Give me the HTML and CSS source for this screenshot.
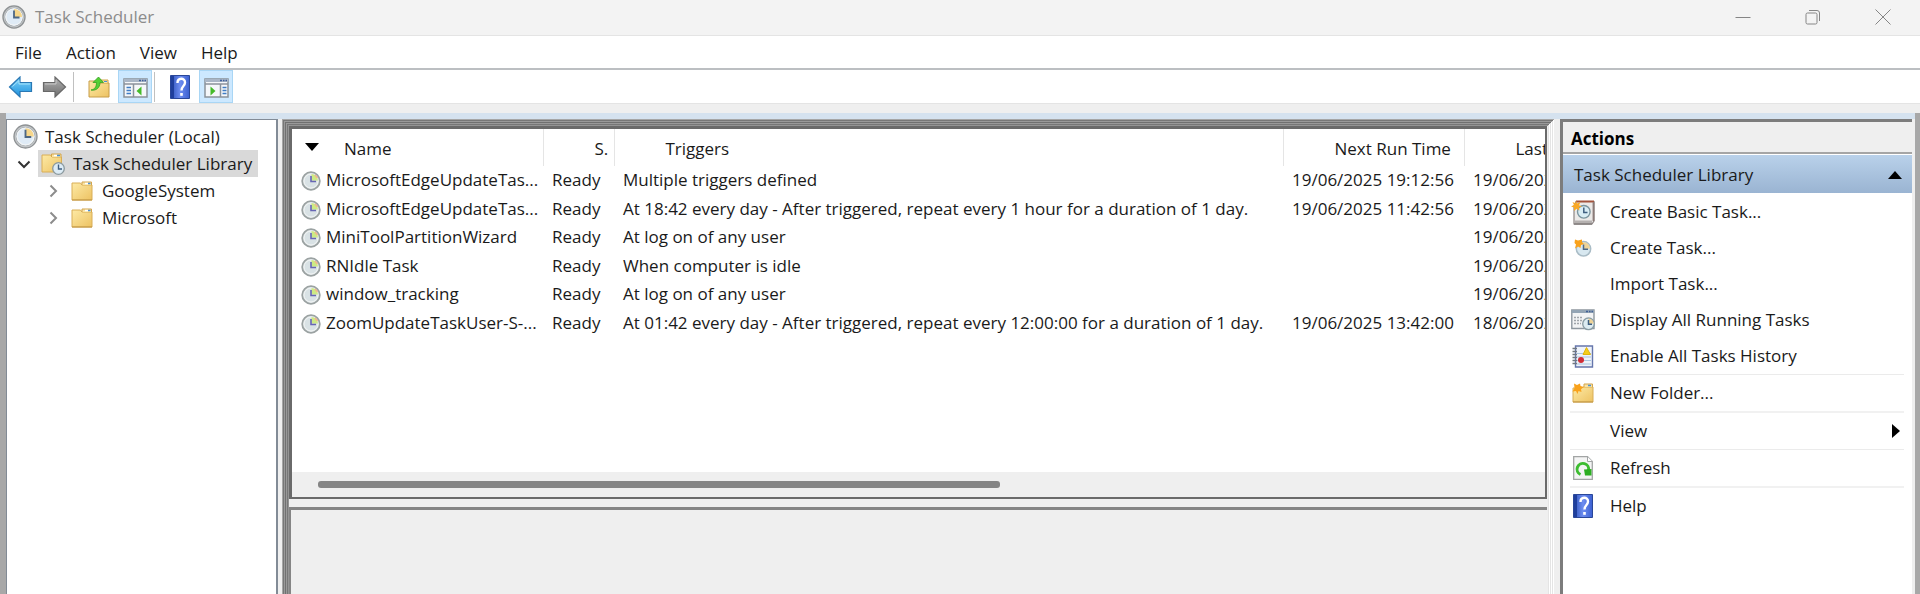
FILE: index.html
```html
<!DOCTYPE html>
<html lang="en">
<head>
<meta charset="utf-8">
<title>Task Scheduler</title>
<link rel="stylesheet" href="styles.css">
</head>
<body>
<svg class="defs" aria-hidden="true">
  <defs>
    <linearGradient id="gold" x1="0" y1="0" x2="1" y2="1"><stop offset="0" stop-color="#fdeaa6"/><stop offset="1" stop-color="#edc262"/></linearGradient>
    <linearGradient id="blue" x1="0" y1="0" x2="0" y2="1"><stop offset="0" stop-color="#7fd4fa"/><stop offset="1" stop-color="#1c8fdc"/></linearGradient>
    <linearGradient id="grey" x1="0" y1="0" x2="0" y2="1"><stop offset="0" stop-color="#b4b4b4"/><stop offset="1" stop-color="#6c6c6c"/></linearGradient>
    <linearGradient id="book" x1="0" y1="0" x2="1" y2="0"><stop offset="0" stop-color="#2b50b8"/><stop offset="0.5" stop-color="#6d8df0"/><stop offset="1" stop-color="#3a5fd0"/></linearGradient>
  </defs>
  <symbol id="i-clock" viewBox="0 0 24 24">
    <circle cx="12" cy="12" r="10.300" fill="#e3eef7" stroke="#8e9294" stroke-width="2.800"/>
    <circle cx="12" cy="12" r="9.800" fill="none" stroke="#c3c6c8" stroke-width="1.200"/>
    <circle cx="12" cy="12" r="8" fill="#dfebf6" stroke="#f2f4f5" stroke-width="1"/>
    <path d="M12 12V4A8 8 0 0 1 20 12Z" fill="#f6d68a"/>
    <path d="M12 5.500V12.500H17.500" fill="none" stroke="#4d6784" stroke-width="1.800"/>
  </symbol>
  <symbol id="i-task" viewBox="0 0 20 20">
    <circle cx="10" cy="10" r="8.800" fill="#dde4e6" stroke="#9ba2a2" stroke-width="1.800"/>
    <circle cx="10" cy="10" r="7" fill="#d9e2e5" stroke="#f3f5f5"/>
    <path d="M10.500 9.500V3A7 7 0 0 1 17 9.500Z" fill="#cdea84"/>
    <path d="M14 4l2.500 3" stroke="#f4b58c" stroke-width="1.500"/>
    <path d="M10 5V10.500H15" fill="none" stroke="#6766b4" stroke-width="1.600"/>
  </symbol>
  <symbol id="i-folder" viewBox="0 0 22 20">
    <path d="M1 2H9.500L11 4H21V19H1Z" fill="url(#gold)" stroke="#d9ae56"/>
    <path d="M11 4V1H20.500V4" fill="#f8e3a4" stroke="#d3a54c"/>
    <path d="M14 2.500H17" stroke="#fff" stroke-width="1.500"/><path d="M17 2.500H19.500" stroke="#4a90d6" stroke-width="1.500"/>
    <path d="M1 19H21" stroke="#bf9443"/>
  </symbol>
  <symbol id="i-folder-clock" viewBox="0 0 24 22">
    <path d="M1 2H9.500L11 4H20.500V19H1Z" fill="url(#gold)" stroke="#d9ae56"/>
    <path d="M10.500 4V1H20V4" fill="#f8e3a4" stroke="#d3a54c"/>
    <path d="M13 2.500H16" stroke="#fff" stroke-width="1.500"/><path d="M16 2.500H19" stroke="#4a90d6" stroke-width="1.500"/>
    <circle cx="17.500" cy="15.500" r="5.800" fill="#dcebf5" stroke="#8a999e" stroke-width="1.300"/>
    <path d="M17.500 11.500V16H21" fill="none" stroke="#3f5f80" stroke-width="1.400"/>
  </symbol>
  <symbol id="i-back" viewBox="0 0 24 22">
    <path d="M1 11L11.500 1V6.500H23V15.500H11.500V21Z" fill="url(#blue)" stroke="#2a78b4" stroke-width="1.200"/>
    <path d="M4 10.500L10.500 4.500V8H21.500" fill="none" stroke="#a5e2fb"/>
  </symbol>
  <symbol id="i-forward" viewBox="0 0 24 22">
    <path d="M23 11L12.500 1V6.500H1V15.500H12.500V21Z" fill="url(#grey)" stroke="#686868" stroke-width="1.200"/>
    <path d="M2.500 8H13.500V4" fill="none" stroke="#c8c8c8"/>
  </symbol>
  <symbol id="i-up" viewBox="0 0 22 22">
    <path d="M1 5H9L11 7H21V21H1Z" fill="url(#gold)" stroke="#c79c48"/>
    <path d="M11 7V4H20V7" fill="#f8e3a4" stroke="#d3a54c"/><path d="M16 5.500H19" stroke="#4a90d6"/>
    <path d="M3 14C7 13.500 8.500 10.500 8.500 6.500H5L10.500 1L15.500 6.500H12C12 11.500 8.500 15 3 14Z" fill="#55cf35" stroke="#34a11e" stroke-width="0.800"/>
  </symbol>
  <symbol id="i-pane-left" viewBox="0 0 25 20">
    <path d="M1 1H24V19H1Z" fill="#f5f7fa" stroke="#8b929b" stroke-width="1.500"/>
    <path d="M1 1H24V4H1Z" fill="#aab6c6"/><path d="M1 6H24" stroke="#8b929b" stroke-width="1.500"/>
    <path d="M16 2.500H18M19 2.500H20.500M21.500 2.500H23" stroke="#3f5f9c" stroke-width="1.500"/>
    <path d="M10.500 6V19" stroke="#8b929b" stroke-width="1.500"/>
    <path d="M3.500 9.500H8M3.500 12.500H8M3.500 15.500H8" stroke="#3f7cc4" stroke-width="1.500"/>
    <path d="M18.500 8.500V17.500L13.500 13Z" fill="#45bb2a"/>
  </symbol>
  <symbol id="i-pane-right" viewBox="0 0 25 20">
    <path d="M1 1H24V19H1Z" fill="#f5f7fa" stroke="#8b929b" stroke-width="1.500"/>
    <path d="M1 1H24V4H1Z" fill="#aab6c6"/><path d="M1 6H24" stroke="#8b929b" stroke-width="1.500"/>
    <path d="M16 2.500H18M19 2.500H20.500M21.500 2.500H23" stroke="#3f5f9c" stroke-width="1.500"/>
    <path d="M16.500 6V19" stroke="#8b929b" stroke-width="1.500"/>
    <path d="M18.500 9.500H22.500M18.500 12.500H22.500M18.500 15.500H22.500" stroke="#3f7cc4" stroke-width="1.500"/>
    <path d="M6.500 8.500V17.500L11.500 13Z" fill="#45bb2a"/>
  </symbol>
  <symbol id="i-help" viewBox="0 0 20 24">
    <path d="M0.500 0.500H19.500V23.500H0.500Z" fill="url(#book)" stroke="#2a4799"/>
    <path d="M2.500 1V23" stroke="#1f3f9c" stroke-width="3"/>
    <path d="M7.500 8C7.500 2.500 15 2.500 15 7.500C15 11 11.500 11 11.500 15.500" fill="none" stroke="#fff" stroke-width="2.400"/>
    <path d="M11.500 18V20.800" stroke="#fff" stroke-width="2.600"/>
  </symbol>
  <symbol id="i-basic" viewBox="0 0 24 25">
    <path d="M5 1.500H23V21L21 24H3V6Z" fill="#eceae8" stroke="#8d8584" stroke-width="1.200"/>
    <path d="M5 1.500H23" stroke="#a3533d" stroke-width="2"/><path d="M22.500 2V21" stroke="#8c7b78" stroke-width="1.800"/>
    <path d="M3 20.500H21V24H3Z" fill="#b5b1b0"/><path d="M3 24H21" stroke="#817b7a" stroke-width="1.500"/>
    <circle cx="12.800" cy="11.800" r="6.300" fill="#d9edf4" stroke="#7b959f" stroke-width="1.400"/>
    <path d="M12.800 7.500V12.500H16.500" fill="none" stroke="#3f5f80" stroke-width="1.500"/>
    <path d="M5 0.500L6 3.500L9.500 2L8 5.200L11 6.500L7.800 7.500L8.500 10.500L5.500 8.800L3 11L3 7.600L0 6.500L3 5L1.500 2L4.300 3.300Z" fill="#f9a825"/>
  </symbol>
  <symbol id="i-create" viewBox="0 0 18 18">
    <circle cx="9.500" cy="9.800" r="7.200" fill="#d8e8f0" stroke="#a9bcc6" stroke-width="1.500"/>
    <path d="M9.500 9.800V3A6.500 6.500 0 0 1 16 9.800Z" fill="#eed398"/>
    <path d="M9.500 5.500V10.200H14" fill="none" stroke="#4d6784" stroke-width="1.500"/>
    <path d="M1 0.500L4 1.500L8 0.500V3L10 5L7 6L6.500 9L4 7.500L1 9.500L2 5.500L0.500 4Z" fill="#f9a21b"/>
  </symbol>
  <symbol id="i-running" viewBox="0 0 24 22">
    <path d="M0.800 1H23V19.500H0.800Z" fill="#f2f3f4" stroke="#8e979f" stroke-width="1.400"/>
    <path d="M0.800 1H23V4H0.800Z" fill="#93a4b4"/><path d="M15 2.500H17M18 2.500H19.500M20.500 2.500H22" stroke="#405f96" stroke-width="1.500"/>
    <path d="M3 8.500H12M3 11.500H11M3 14.500H10" stroke="#a0a5aa" stroke-width="1.500" stroke-dasharray="2 1"/>
    <circle cx="17.500" cy="14.800" r="5.800" fill="#dcebf1" stroke="#8b9da5" stroke-width="1.400"/>
    <path d="M17.500 14.800V9.500A5 5 0 0 1 22.500 14.800Z" fill="#eed398"/>
    <path d="M17.500 11V15.200H21" fill="none" stroke="#3f5f80" stroke-width="1.500"/>
  </symbol>
  <symbol id="i-history" viewBox="0 0 22 23">
    <path d="M3.500 1H20.500V22H3.500Z" fill="#eef3fa" stroke="#6576ac" stroke-width="1.400"/>
    <path d="M5 8.500H19M5 12H19M5 15.500H19M5 19H19" stroke="#a9c6df" stroke-width="1.200"/>
    <path d="M0.500 3.500H5M0.500 6.500H5M0.500 9.500H5M0.500 12.500H5M0.500 15.500H5M0.500 18.500H5" stroke="#707780" stroke-width="1.300"/>
    <path d="M14.500 2.500L18.500 9.500H11Z" fill="#f5ce1b" stroke="#e0b40c"/>
    <circle cx="9" cy="15" r="3" fill="#d12d36"/>
  </symbol>
  <symbol id="i-new-folder" viewBox="0 0 22 20">
    <path d="M1 5H10L11 4H21V19H1Z" fill="url(#gold)" stroke="#d9ae56"/>
    <path d="M12 4V1H20.500V4" fill="#f8e3a4" stroke="#d3a54c"/><path d="M16 2.500H19" stroke="#4a90d6" stroke-width="1.500"/>
    <path d="M1 19H21" stroke="#bf9443"/>
    <path d="M2 0.500L5 2L8 0.500L8.500 3L12 4L9 6L9.500 9L6.500 8L5.500 11L4 8L0.500 8.500L2.500 5Z" fill="#f9a21b"/>
  </symbol>
  <symbol id="i-refresh" viewBox="0 0 20 24">
    <path d="M0.700 0.700H14.500L19.300 5.500V23.300H0.700Z" fill="#f4f5f5" stroke="#a2a5a5" stroke-width="1.300"/>
    <path d="M14.500 0.700V5.500H19.300" fill="#fff" stroke="#a2a5a5"/>
    <path d="M7.500 18.500A5.800 5.800 0 1 1 15.500 14.500" fill="none" stroke="#3dbd31" stroke-width="3"/>
    <path d="M11 13.500L18.500 13V19.500H12Z" fill="#2cae22"/>
  </symbol>
</svg>

<div class="window">
  <header class="titlebar">
    <svg class="app-icon"><use href="#i-clock"/></svg>
    <h1 class="app-title">Task Scheduler</h1>
    <div class="window-buttons">
      <button class="window-button" aria-label="Minimize"><svg width="16" height="16" viewBox="0 0 16 16"><path d="M0.500 8.500H15.500"/></svg></button>
      <button class="window-button" aria-label="Restore"><svg width="16" height="16" viewBox="0 0 16 16"><rect x="1" y="4" width="11" height="11" rx="1.500"/><path d="M4 1.500H12Q14.500 1.500 14.500 4V12"/></svg></button>
      <button class="window-button" aria-label="Close"><svg width="16" height="16" viewBox="0 0 16 16"><path d="M0.500 0.500L15.500 15.500M15.500 0.500L0.500 15.500"/></svg></button>
    </div>
  </header>

  <nav class="menubar">
    <button class="menu">File</button>
    <button class="menu">Action</button>
    <button class="menu">View</button>
    <button class="menu">Help</button>
  </nav>

  <div class="toolbar">
    <button class="tool" aria-label="Back"><svg width="25" height="22"><use href="#i-back"/></svg></button>
    <button class="tool" aria-label="Forward"><svg width="25" height="22"><use href="#i-forward"/></svg></button>
    <span class="divider"></span>
    <button class="tool wide" aria-label="Up one level"><svg width="22" height="22"><use href="#i-up"/></svg></button>
    <button class="tool pressed" aria-label="Show console tree"><svg width="25" height="20"><use href="#i-pane-left"/></svg></button>
    <span class="divider"></span>
    <button class="tool wide" aria-label="Help"><svg width="20" height="24"><use href="#i-help"/></svg></button>
    <button class="tool pressed" aria-label="Show action pane"><svg width="25" height="20"><use href="#i-pane-right"/></svg></button>
  </div>

  <main class="workspace">
    <nav class="tree" aria-label="Console tree">
      <a class="node root" href="#"><svg width="25" height="25"><use href="#i-clock"/></svg>Task Scheduler (Local)</a>
      <div class="branch">
        <svg class="chevron open" width="14" height="14" viewBox="0 0 14 14"><path d="M1.500 4.500L7 10L12.500 4.500"/></svg>
        <a class="node selected" href="#"><svg width="24" height="22"><use href="#i-folder-clock"/></svg>Task Scheduler Library</a>
      </div>
      <div class="branch child">
        <svg class="chevron" width="14" height="14" viewBox="0 0 14 14"><path d="M4.500 1.500L10 7L4.500 12.500"/></svg>
        <a class="node" href="#"><svg width="22" height="20"><use href="#i-folder"/></svg>GoogleSystem</a>
      </div>
      <div class="branch child">
        <svg class="chevron" width="14" height="14" viewBox="0 0 14 14"><path d="M4.500 1.500L10 7L4.500 12.500"/></svg>
        <a class="node" href="#"><svg width="22" height="20"><use href="#i-folder"/></svg>Microsoft</a>
      </div>
    </nav>

    <section class="center">
      <div class="list-pane">
        <table class="tasks">
          <colgroup><col class="c-name"><col class="c-status"><col><col class="c-next"><col class="c-last"></colgroup>
          <thead>
            <tr><th><svg class="sort" width="14" height="8" viewBox="0 0 14 8"><path d="M0 0H14L7 8Z"/></svg>Name</th><th>S.</th><th>Triggers</th><th>Next Run Time</th><th>Last</th></tr>
          </thead>
          <tbody>
            <tr><td><svg class="task-icon"><use href="#i-task"/></svg>MicrosoftEdgeUpdateTas...</td><td>Ready</td><td>Multiple triggers defined</td><td>19/06/2025 19:12:56</td><td>19/06/202</td></tr>
            <tr><td><svg class="task-icon"><use href="#i-task"/></svg>MicrosoftEdgeUpdateTas...</td><td>Ready</td><td>At 18:42 every day - After triggered, repeat every 1 hour for a duration of 1 day.</td><td>19/06/2025 11:42:56</td><td>19/06/202</td></tr>
            <tr><td><svg class="task-icon"><use href="#i-task"/></svg>MiniToolPartitionWizard</td><td>Ready</td><td>At log on of any user</td><td></td><td>19/06/202</td></tr>
            <tr><td><svg class="task-icon"><use href="#i-task"/></svg>RNIdle Task</td><td>Ready</td><td>When computer is idle</td><td></td><td>19/06/202</td></tr>
            <tr><td><svg class="task-icon"><use href="#i-task"/></svg>window_tracking</td><td>Ready</td><td>At log on of any user</td><td></td><td>19/06/202</td></tr>
            <tr><td><svg class="task-icon"><use href="#i-task"/></svg>ZoomUpdateTaskUser-S-...</td><td>Ready</td><td>At 01:42 every day - After triggered, repeat every 12:00:00 for a duration of 1 day.</td><td>19/06/2025 13:42:00</td><td>18/06/202</td></tr>
          </tbody>
        </table>
        <div class="scrollbar"><div class="thumb"></div></div>
      </div>
      <div class="detail-pane"></div>
    </section>

    <aside class="actions">
      <h2 class="actions-title">Actions</h2>
      <button class="group">Task Scheduler Library<svg width="14" height="8" viewBox="0 0 14 8"><path d="M7 0L14 8H0Z"/></svg></button>
      <div class="action-list">
        <button class="action"><span class="slot"><svg width="24" height="25"><use href="#i-basic"/></svg></span>Create Basic Task...</button>
        <button class="action"><span class="slot"><svg width="18" height="18"><use href="#i-create"/></svg></span>Create Task...</button>
        <button class="action"><span class="slot"></span>Import Task...</button>
        <button class="action"><span class="slot"><svg width="24" height="22"><use href="#i-running"/></svg></span>Display All Running Tasks</button>
        <button class="action"><span class="slot"><svg width="22" height="23"><use href="#i-history"/></svg></span>Enable All Tasks History</button>
        <hr class="rule">
        <button class="action"><span class="slot"><svg width="22" height="20"><use href="#i-new-folder"/></svg></span>New Folder...</button>
        <hr class="rule thick">
        <button class="action"><span class="slot"></span>View<svg class="submenu" width="8" height="14" viewBox="0 0 8 14"><path d="M0 0L8 7L0 14Z"/></svg></button>
        <hr class="rule">
        <button class="action"><span class="slot"><svg width="20" height="24"><use href="#i-refresh"/></svg></span>Refresh</button>
        <hr class="rule thick">
        <button class="action"><span class="slot"><svg width="20" height="24"><use href="#i-help"/></svg></span>Help</button>
      </div>
    </aside>
  </main>
</div>
</body>
</html>
```
FILE: styles.css
```css
* { box-sizing: border-box; }

body {
  margin: 0;
  background: #efefef;
  color: #1a1a1a;
  font: 17px/24px "Segoe UI", "Open Sans", "Noto Sans", sans-serif;
}

button {
  margin: 0;
  padding: 0;
  border: 0;
  background: none;
  color: inherit;
  font: inherit;
}

a { color: inherit; text-decoration: none; }
svg { flex: none; }
.defs { position: absolute; width: 0; height: 0; }

.window {
  display: flex;
  flex-direction: column;
  min-height: 100vh;
}

/* Title bar */
.titlebar {
  display: flex;
  align-items: center;
  height: 36px;
  padding: 0 2px 2px;
  border-bottom: 1px solid #e4e4e4;
  background: #f3f3f3;
}
.app-icon { width: 24px; height: 24px; }
.app-title {
  margin: 0 0 0 9px;
  color: #8c8c8c;
  font-size: 17px;
  font-weight: 400;
}
.window-buttons { display: flex; margin-left: auto; }
.window-button {
  display: flex;
  align-items: center;
  justify-content: center;
  width: 70px;
  height: 32px;
}
.window-button svg { fill: none; stroke: #858585; }

/* Menu and toolbar */
.menubar {
  display: flex;
  gap: 24px;
  height: 34px;
  padding: 2px 15px 0;
  border-bottom: 2px solid #bcbfc2;
  background: #fff;
}
.toolbar {
  display: flex;
  align-items: center;
  height: 34px;
  padding-left: 3px;
  border-bottom: 1px solid #e4e4e4;
  background: #fff;
}
.tool {
  display: flex;
  align-items: center;
  justify-content: center;
  width: 34px;
  height: 33px;
}
.tool.wide { width: 44px; padding-left: 6px; }
.tool.pressed {
  padding-top: 2px;
  border: 1px solid #a9d6f5;
  background: #cce8ff;
}
.divider { width: 1px; height: 30px; margin-left: 2px; background: #c0c0c0; }

/* Workspace */
.workspace {
  display: flex;
  flex: 1;
  margin-top: 9px;
  padding-top: 6px;
  border: solid #a8a8a8;
  border-width: 0 5px 0 6px;
  background: linear-gradient(#d5e2ef 6px, #efefef 6px);
}

.tree {
  flex: none;
  width: 272px;
  padding: 3px 0 0 6px;
  border: 1px solid #828b96;
  border-width: 1px 2px 0 1px;
  background: #fff;
}
.node { display: flex; align-items: center; gap: 9px; height: 27px; white-space: nowrap; }
.root { gap: 7px; }
.branch { display: flex; align-items: center; gap: 7px; padding-left: 4px; }
.branch.child { gap: 11px; padding-left: 33px; }
.selected { gap: 8px; padding: 0 6px 0 3px; background: #d9d9d9; }
.chevron { fill: none; stroke: #8c8c8c; stroke-width: 2; }
.chevron.open { stroke: #333; }

/* Centre panes, inside a stack of nested bevels */
.center {
  display: flex;
  flex: 1;
  flex-direction: column;
  min-width: 0;
  margin: 0 6px 0 4px;
  padding: 7px 7px 0;
  box-shadow:
    inset 1px 1px #a6a6a6, inset -1px 0 #fff,
    inset 2px 2px #777, inset -2px 0 #e4e4e4,
    inset 3px 3px #999, inset -3px 0 #fff,
    inset 4px 4px #707070, inset -4px 0 #e4e4e4,
    inset 5px 5px #999, inset -5px 0 #fff,
    inset 6px 6px #777, inset -6px 0 #e4e4e4,
    inset 7px 7px #949494;
}
.list-pane {
  display: flex;
  flex-direction: column;
  height: 373px;
  overflow: hidden;
  border: 2px solid #6a6a6a;
  border-width: 3px 2px 2px 3px;
  background: #fff;
}
.tasks {
  width: 100%;
  border-collapse: collapse;
  table-layout: fixed;
  text-align: left;
  white-space: nowrap;
}
.c-name { width: 251px; }
.c-status { width: 71px; }
.c-next { width: 181px; }
.c-last { width: 81px; }
.tasks th {
  height: 37px;
  padding: 3px 0 0 51px;
  overflow: hidden;
  border-right: 1px solid #e5e5e5;
  font-weight: 400;
}
.tasks th:last-child { border-right: 0; }
.sort { margin: 0 25px 4px -38px; }
.tasks td { height: 28px; padding: 0 0 0 9px; overflow: hidden; }
.tasks tr:nth-child(even) td { height: 29px; }
.task-icon { width: 20px; height: 20px; margin-right: 5px; vertical-align: middle; }

.scrollbar { height: 25px; margin-top: auto; padding: 9px 545px 9px 26px; background: #efefef; }
.thumb { height: 7px; border-radius: 3px; background: #858585; }

.detail-pane {
  flex: 1;
  margin-top: 8px;
  border: solid #858585;
  border-width: 3px 0 0 2px;
  background: #efefef;
}

/* Actions pane */
.actions {
  flex: none;
  width: 352px;
  margin-right: 3px;
  border: solid #7c7c7c;
  border-width: 3px 0 0 3px;
  background: #fff;
}
.actions-title {
  height: 32px;
  margin: 0;
  padding: 5px 8px 0;
  border-bottom: 2px solid #a5a5a5;
  background: #efefef;
  color: #000;
  font-size: 17px;
  font-weight: 700;
}
.group {
  display: flex;
  align-items: center;
  justify-content: space-between;
  width: 100%;
  height: 38px;
  margin-top: 1px;
  padding: 2px 10px 0 11px;
  background: linear-gradient(#b9d1ea, #9ab4d2);
}
.action-list { padding: 1px 8px 0 7px; }
.action { display: flex; align-items: center; width: 100%; height: 36px; text-align: left; }
.slot { display: flex; justify-content: center; width: 26px; margin-right: 14px; }
.submenu { margin: 0 4px 0 auto; }
.rule { height: 1px; margin: 0; border: 0; background: #ebebeb; }
.rule.thick { height: 2px; background: #f1f1f1; }
```
